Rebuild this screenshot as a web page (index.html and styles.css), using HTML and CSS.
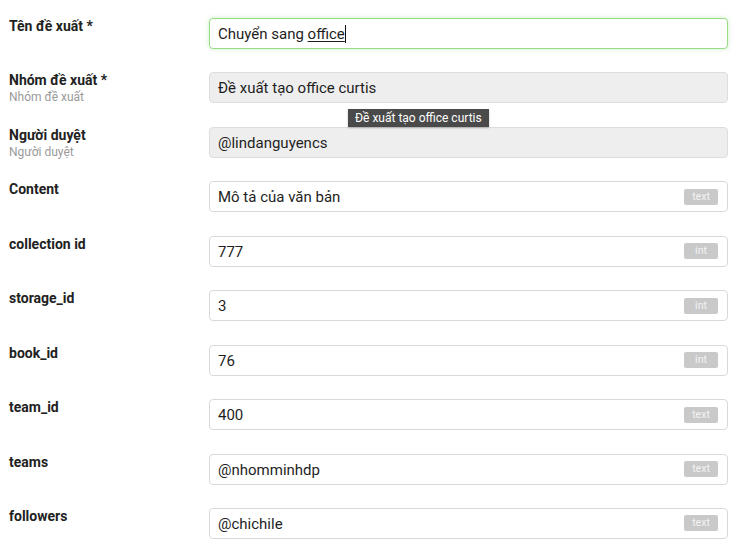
FILE: index.html
```html
<!DOCTYPE html>
<html lang="vi">
<head>
<meta charset="utf-8">
<link rel="stylesheet" href="styles.css">
</head>
<body>
<form class="form">
  <div class="row">
    <div class="label"><div class="name">Tên đề xuất *</div></div>
    <div class="field focus"><span class="value">Chuyển sang <span class="compose">office</span><span class="caret"></span></span></div>
  </div>
  <div class="row">
    <div class="label"><div class="name">Nhóm đề xuất *</div><div class="hint">Nhóm đề xuất</div></div>
    <div class="field disabled has-tip"><span class="value">Đề xuất tạo office curtis</span>
      <div class="tooltip">Đề xuất tạo office curtis</div>
    </div>
  </div>
  <div class="row">
    <div class="label"><div class="name">Người duyệt</div><div class="hint">Người duyệt</div></div>
    <div class="field disabled"><span class="value">@lindanguyencs</span></div>
  </div>
  <div class="row">
    <div class="label"><div class="name">Content</div></div>
    <div class="field"><span class="value">Mô tả của văn bản</span><span class="badge">text</span></div>
  </div>
  <div class="row">
    <div class="label"><div class="name">collection id</div></div>
    <div class="field"><span class="value">777</span><span class="badge">int</span></div>
  </div>
  <div class="row">
    <div class="label"><div class="name">storage_id</div></div>
    <div class="field"><span class="value">3</span><span class="badge">int</span></div>
  </div>
  <div class="row">
    <div class="label"><div class="name">book_id</div></div>
    <div class="field"><span class="value">76</span><span class="badge">int</span></div>
  </div>
  <div class="row">
    <div class="label"><div class="name">team_id</div></div>
    <div class="field"><span class="value">400</span><span class="badge">text</span></div>
  </div>
  <div class="row">
    <div class="label"><div class="name">teams</div></div>
    <div class="field"><span class="value">@nhomminhdp</span><span class="badge">text</span></div>
  </div>
  <div class="row">
    <div class="label"><div class="name">followers</div></div>
    <div class="field"><span class="value">@chichile</span><span class="badge">text</span></div>
  </div>
</form>
</body>
</html>
```
FILE: styles.css
```css
html, body {
  margin: 0;
  padding: 0;
  background: #ffffff;
}
body {
  font-family: Roboto, "Liberation Sans", Arial, sans-serif;
  color: #222222;
}
.form {
  display: flex;
  flex-direction: column;
  gap: 23.45px;
  padding: 18px 10px 0 9px;
}
.row {
  display: flex;
  align-items: flex-start;
  height: 31px;
}
.label {
  width: 200px;
  flex: none;
}
.name {
  font-size: 14px;
  font-weight: 700;
  line-height: 17px;
  color: #222222;
}
.hint {
  font-size: 12px;
  line-height: 15px;
  color: #9a9a9a;
  margin-top: 1px;
}
.field {
  position: relative;
  flex: 1;
  height: 31px;
  box-sizing: border-box;
  border: 1px solid #d9d9d9;
  border-radius: 4px;
  background: #ffffff;
  display: flex;
  align-items: center;
  padding: 0 9px 0 8px;
}
.field.focus {
  border-color: #97dd85;
  box-shadow: 0 0 5px rgba(120, 210, 100, 0.35);
}
.field.disabled {
  background: #eeeeee;
  border-color: #dddddd;
}
.value {
  flex: 1;
  font-size: 15px;
  color: #1e1e1e;
  white-space: nowrap;
  line-height: 20px;
  padding-top: 1px;
}
.compose {
  text-decoration: underline;
  text-decoration-thickness: 1px;
  text-underline-offset: 2px;
}
.caret {
  display: inline-block;
  width: 1px;
  height: 18px;
  background: #111111;
  vertical-align: -4px;
}
.badge {
  flex: none;
  width: 34px;
  height: 16px;
  box-sizing: border-box;
  border-radius: 2px;
  background: #c9c9c9;
  color: #f4f4f4;
  font-size: 10.5px;
  line-height: 16px;
  text-align: center;
}
.tooltip {
  position: absolute;
  left: 138px;
  top: 36px;
  height: 18px;
  padding: 0 7px;
  background: #4a4a4a;
  color: #ffffff;
  font-size: 12px;
  font-weight: 400;
  line-height: 18px;
  white-space: nowrap;
  box-shadow: 0 1px 2px rgba(0,0,0,0.25);
  z-index: 2;
}
```
